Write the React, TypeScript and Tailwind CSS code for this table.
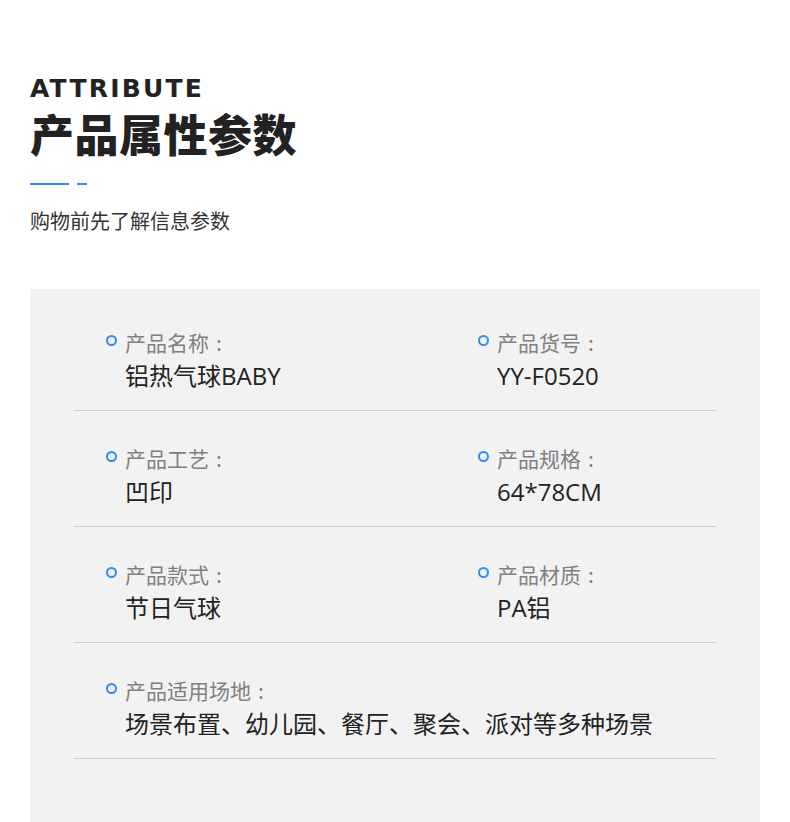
const cjk = '"Noto Sans CJK SC", "Noto Sans", sans-serif';
const mixed = '"Open Sans", "Noto Sans CJK SC", sans-serif';

type Item = { label: string; value: string };

const rows: Item[][] = [
  [
    { label: '产品名称', value: '铝热气球BABY' },
    { label: '产品货号', value: 'YY-F0520' },
  ],
  [
    { label: '产品工艺', value: '凹印' },
    { label: '产品规格', value: '64*78CM' },
  ],
  [
    { label: '产品款式', value: '节日气球' },
    { label: '产品材质', value: 'PA铝' },
  ],
  [{ label: '产品适用场地', value: '场景布置、幼儿园、餐厅、聚会、派对等多种场景' }],
];

function Field({ item, wide }: { item: Item; wide?: boolean }) {
  return (
    <div className={wide ? 'flex-1' : 'w-[372px] shrink-0'}>
      <div className="flex items-center h-[30px]">
        <span className="w-[11px] h-[11px] rounded-full border-2 border-[#2d8cf0] mr-[8px] -mt-[3px]" />
        <span className="text-[21px] leading-[30px] text-[#808080]">
          {item.label}
          <span className="ml-[7px]">:</span>
        </span>
      </div>
      <div className="mt-[2px] pl-[19px] text-[24px] leading-[34px] text-[#222]" style={{ fontFamily: mixed }}>
        {item.value}
      </div>
    </div>
  );
}

export default function App() {
  return (
    <div className="bg-white h-[822px] overflow-hidden px-[30px] pt-[79px]" style={{ fontFamily: cjk }}>
      {/* header */}
      <div
        className="h-[20px] text-[25px] leading-[20px] font-bold tracking-[2.2px] text-[#222]"
        style={{ fontFamily: '"DejaVu Sans", sans-serif' }}
      >
        ATTRIBUTE
      </div>
      <h1 className="mt-[12px] text-[44px] leading-[44px] font-black text-[#222] tracking-[0.5px]">
        产品属性参数
      </h1>
      <div className="mt-[28px] flex gap-[8px]">
        <span className="block w-[39px] h-[2px] bg-[#2d8cf0]" />
        <span className="block w-[10px] h-[2px] bg-[#2d8cf0]" />
      </div>
      <p className="mt-[26px] text-[20px] leading-[20px] text-[#333]">购物前先了解信息参数</p>

      {/* attribute panel */}
      <div className="mt-[58px] bg-[#f2f2f2] px-[44px] pt-[6px] pb-[80px]">
        {rows.map((row, i) => (
          <div key={i} className="flex px-[32px] pt-[32px] pb-[17px] border-b border-[#cacaca]">
            {row.map((item, j) => (
              <Field key={j} item={item} wide={row.length === 1} />
            ))}
          </div>
        ))}
      </div>
    </div>
  );
}
